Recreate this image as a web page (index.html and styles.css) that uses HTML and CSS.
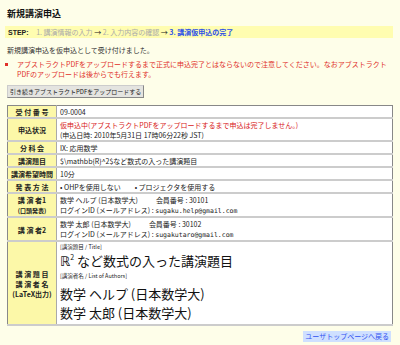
FILE: index.html
```html
<!DOCTYPE html>
<html lang="ja">
<head>
<meta charset="utf-8">
<link rel="stylesheet" href="styles.css">
</head>
<body>
<div class="page">
  <h1 class="title">新規講演申込</h1>
  <div class="steps">
    <span class="step-label">STEP:</span>
    <span class="step-done">1. 講演情報の入力</span>
    <span class="arrow">→</span>
    <span class="step-done">2. 入力内容の確認</span>
    <span class="arrow">→</span>
    <span class="step-now">3. 講演仮申込の完了</span>
  </div>
  <p class="msg">新規講演申込を仮申込として受け付けました。</p>
  <ul class="notes">
    <li>アブストラクトPDFをアップロードするまで正式に申込完了とはならないので注意してください。なおアブストラクトPDFのアップロードは後からでも行えます。</li>
  </ul>
  <button class="btn" type="button">引き続きアブストラクトPDFをアップロードする</button>
  <table class="info">
    <tr><th>受 付 番 号</th><td>09-0004</td></tr>
    <tr><th>申込状況</th><td><span class="red">仮申込中(アブストラクトPDFをアップロードするまで申込は完了しません。)</span><br>(申込日時: 2010年5月31日 17時06分22秒 JST)</td></tr>
    <tr><th>分 科 会</th><td>IX: 応用数学</td></tr>
    <tr><th>講演題目</th><td>$\mathbb{R}^2$など数式の入った講演題目</td></tr>
    <tr><th>講演希望時間</th><td>10分</td></tr>
    <tr><th>発 表 方 法</th><td>• OHPを使用しない<span class="gap2">• プロジェクタを使用する</span></td></tr>
    <tr><th>講 演 者1<br><span class="sub">(口頭発表)</span></th><td>数学 ヘルプ (日本数学大)<span class="gap">会員番号 : 30101</span><br>ログインID (メールアドレス) : <span class="mono">sugaku.help@gmail.com</span></td></tr>
    <tr><th>講 演 者2</th><td>数学 太郎 (日本数学大)<span class="gap">会員番号 : 30102</span><br>ログインID (メールアドレス) : <span class="mono">sugakutaro@gmail.com</span></td></tr>
    <tr class="latex"><th>講 演 題 目<br>講 演 者 名<br>(LaTeX出力)</th><td>
      <div class="cap">[講演題目 / Title]</div>
      <div class="big big1"><span class="bb">ℝ</span><sup>2</sup> など数式の入った講演題目</div>
      <div class="cap cap2">[講演者名 / List of Authors]</div>
      <div class="big authors">数学 ヘルプ (日本数学大)<br>数学 太郎 (日本数学大)</div>
    </td></tr>
  </table>
  <div class="back-row"><a class="back" href="#">ユーザトップページへ戻る</a></div>
</div>
</body>
</html>
```

FILE: styles.css
```css
html, body {
  margin: 0;
  padding: 0;
  background: #fefee9;
}
body {
  font-family: "Noto Sans CJK JP", "DejaVu Sans", sans-serif;
  font-size: 7px;
  color: #222;
}
.page {
  padding: 8px 7px 0 7px;
}
.title {
  margin: 0 0 6px 0;
  font-size: 9px;
  line-height: 12px;
  font-weight: bold;
  color: #111;
}
.steps {
  background: #fffdb0;
  height: 12px;
  line-height: 12px;
  padding-left: 3px;
  margin-left: -2px;
  font-size: 7px;
}
.step-label {
  font-family: "Liberation Sans", sans-serif;
  font-weight: bold;
  margin-right: 6px;
}
.step-done { color: #aaa; }
.arrow { color: #222; }
.step-now { color: #2a4fe8; font-weight: bold; }
.msg {
  margin: 7px 0 0 0;
  line-height: 10px;
  color: #333;
}
.notes {
  margin: 4px 0 0 0;
  padding-left: 10px;
  color: #e0302a;
  line-height: 10px;
  list-style: square;
}
.btn {
  display: block;
  margin: 6px 0 0 0;
  font-family: "Noto Sans CJK JP", sans-serif;
  font-size: 6px;
  line-height: 9px;
  padding: 1px 2px;
  background: #e4e4e0;
  border: 1px solid #999;
  border-color: #ccc #888 #888 #ccc;
  color: #222;
}
.info {
  margin-top: 7px;
  width: 386px;
  border-collapse: collapse;
  border: 1px solid #888;
  background: #fff;
}
.info th, .info td {
  border-bottom: 2px solid #ccc;
  line-height: 10px;
  padding: 1px 3px 0 3px;
  vertical-align: middle;
}
.info th {
  width: 40px;
  background: #fcf8a8;
  border-right: 1px solid #aaa;
  font-weight: bold;
  text-align: center;
  white-space: nowrap;
  color: #222;
}
.info td { text-align: left; }
.red { color: #d81818; }
.sub { font-size: 6px; }
.gap { margin-left: 18px; }
.gap2 { margin-left: 14px; }
.mono { font-family: "DejaVu Sans Mono", monospace; font-size: 6.5px; }
.latex td { padding: 1px 3px 2px 3px; }
.cap { font-size: 5.5px; line-height: 8px; }
.cap2 { margin-top: 2px; }
.big { font-size: 13px; line-height: 17px; color: #111; }
.big1 { line-height: 16px; margin-top: 2px; }
.authors { margin-top: 4px; line-height: 19px; }
.bb { font-family: "DejaVu Sans", sans-serif; }
.big sup { font-size: 7px; vertical-align: top; line-height: 8px; }
.back-row {
  display: flex;
  justify-content: flex-end;
  margin-top: 5px;
  padding-right: 2px;
}
.back {
  background: #cfe0ff;
  color: #3050f0;
  text-decoration: none;
  font-size: 7px;
  line-height: 11px;
  padding: 0 2px;
}
```
